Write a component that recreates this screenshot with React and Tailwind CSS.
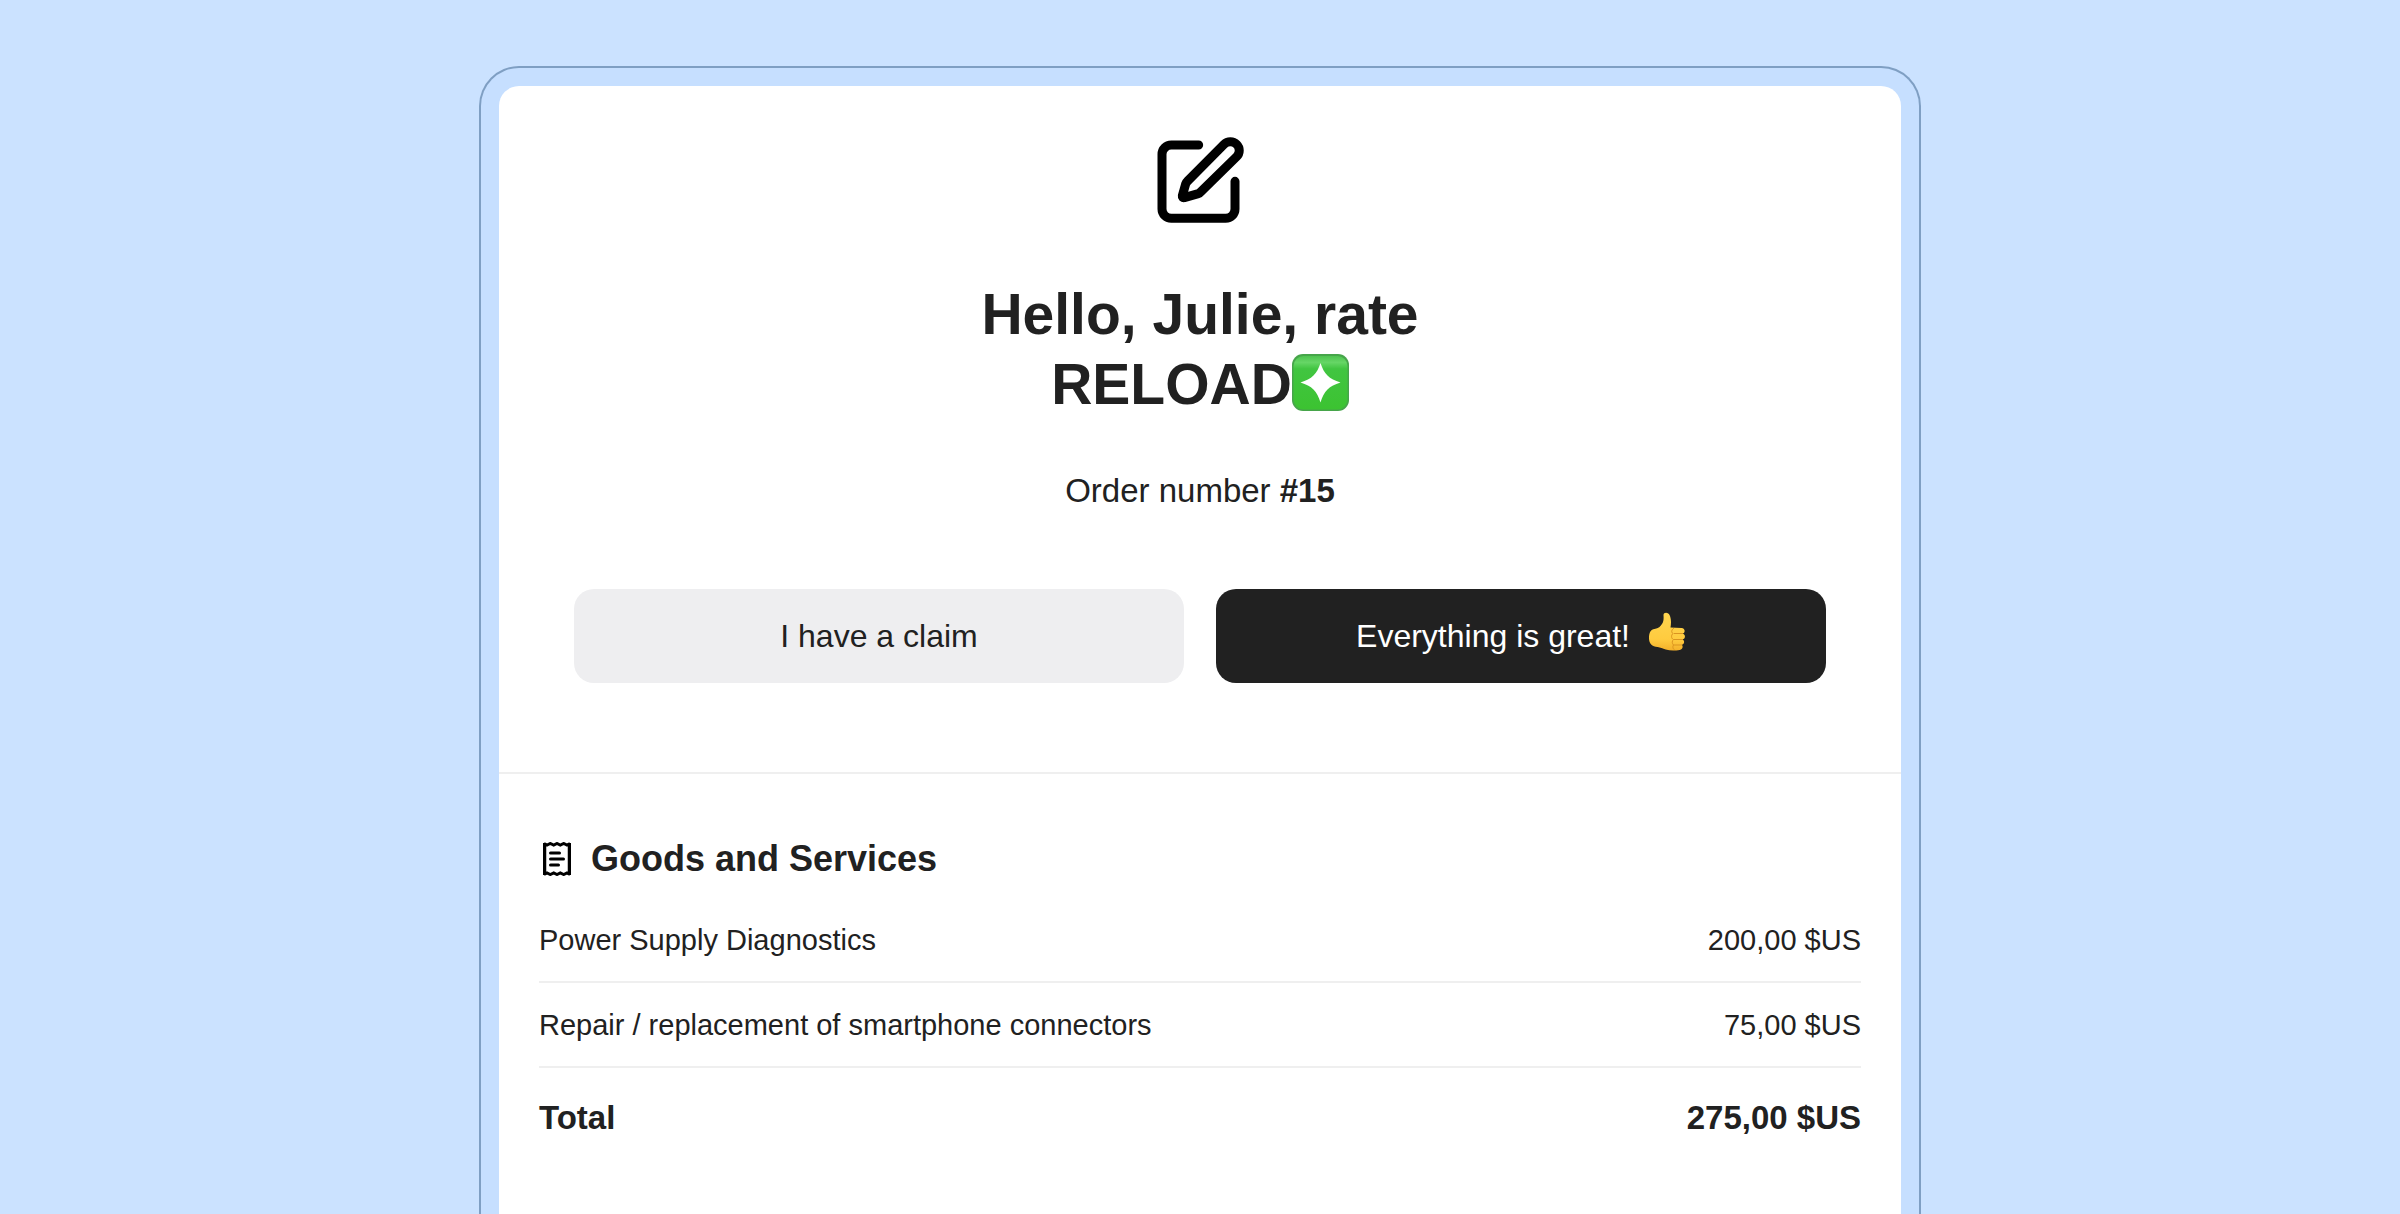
import React from 'react';

const items = [
    { id: 1, title: 'Power Supply Diagnostics', price: '200,00 $US' },
    { id: 2, title: 'Repair / replacement of smartphone connectors', price: '75,00 $US' },
];

function EditIcon() {
    return (
        <svg className="size-[88px]" viewBox="80 49 264 264" fill="none" stroke="#000" strokeWidth="27" strokeLinecap="round" strokeLinejoin="round" aria-hidden="true">
            <path d="M208 76H126a28 28 0 0 0-28 28v164a28 28 0 0 0 28 28h163a28 28 0 0 0 28-28v-83" />
            <path d="M175 184 284 74a27 27 0 0 1 38 0 26 26 0 0 1 0 37L213 218q-2 3-6 4l-42 12q-7 1-6-6l10-35q2-5 6-9Z" />
        </svg>
    );
}

function SparkleIcon() {
    return (
        <svg className="inline-block size-[57px] align-[-7px]" viewBox="0 0 57 57" aria-hidden="true">
            <defs>
                <linearGradient id="sparkle-bg" x1="0" y1="0" x2="0" y2="1">
                    <stop offset="0" stopColor="#4fc350" />
                    <stop offset="0.12" stopColor="#66d666" />
                    <stop offset="0.24" stopColor="#41c541" />
                    <stop offset="1" stopColor="#3cc331" />
                </linearGradient>
            </defs>
            <rect width="57" height="57" rx="11" fill="#46a54a" />
            <rect x="1.5" y="2" width="54" height="53.5" rx="10" fill="url(#sparkle-bg)" />
            <path d="M28.5 9C32 20 37 25 48.5 28.5 37 32 32 37 28.5 48.5 25 37 20 32 8.500 28.500 20 25 25 20 28.500 9Z" fill="#fff" />
        </svg>
    );
}

function ThumbIcon() {
    return (
        <svg className="-mt-2 h-10 w-[38px]" viewBox="0 0 38 40" aria-hidden="true">
            <defs>
                <linearGradient id="thumb-skin" x1="0" y1="0" x2="0" y2="1">
                    <stop offset="0" stopColor="#ffd650" />
                    <stop offset="0.7" stopColor="#ffcb3f" />
                    <stop offset="1" stopColor="#f3b02a" />
                </linearGradient>
            </defs>
            <path d="M15.500 3c0-3 5-3.500 6.500 1 1.500 4.500 1 8 .5 11.500l11 .5c4 .3 4 5 1 5.500 3.500 1 3 5.500 0 6 2.500 1 2 5-.8 5.300 1.800 1.200 1 5-2 5.200-5 .8-10 .8-14-.5-3-1-5.500-2-8-2.500C4 34.500 1 32 1 26c0-6 2-8.500 5.500-9 4-.5 6-2.500 7.800-5.500 1.500-2.500 1.400-5.500 1.200-8.500Z" fill="url(#thumb-skin)" />
            <path d="M34.500 21.500h-8.500M34.500 27.500h-8.500M33.500 33h-7.500M25.500 16.500c-2 1-2.500 4-.5 5-2 1.500-2 5 .5 6-1.800 1.500-1.500 4 0 5.500-1 1.500-.8 3.500.5 4.500" fill="none" stroke="#db9420" strokeWidth="1" strokeLinecap="round" />
        </svg>
    );
}

function ReceiptIcon() {
    return (
        <svg className="h-[34px] w-7" viewBox="0 0 28 34" fill="none" stroke="#000" strokeWidth="3" aria-hidden="true">
            <path d="M1.500 1v32M26.500 1v32" strokeWidth="3.500" />
            <path d="M1 1.500 4 3l3.300-1.500L10.700 3 14 1.500 17.300 3l3.400-1.500L24 3l3-1.500M1 32.500 4 31l3.300 1.500 3.400-1.500 3.300 1.500 3.300-1.500 3.400 1.500L24 31l3 1.500" />
            <path d="M7.500 11h9M7.500 17h13M7.500 23h8" strokeLinecap="round" />
        </svg>
    );
}

export default function App() {
    return (
        <div className="flex min-h-screen flex-col items-center bg-[#cbe2ff] pt-[66px] font-['Liberation_Sans',Arial,sans-serif] text-[#212121]">
            <div className="flex w-full max-w-[1442px] grow flex-col rounded-t-[40px] border-2 border-b-0 border-[#7f9fc3] bg-[#c6dfff] px-[18px] pt-[18px]">
                <main className="grow rounded-t-[20px] bg-white">
                    <section className="flex flex-col items-center border-b-2 border-[#efefef] px-[75px] pt-[50px] pb-[89px] text-center">
                        <EditIcon />
                        <h1 className="mt-[55px] text-[57px] leading-[70px] font-bold">
                            Hello, Julie, rate
                            <br />
                            RELOAD<SparkleIcon />
                        </h1>
                        <p className="mt-[52px] text-[33px] leading-10">
                            Order number <b>#15</b>
                        </p>
                        <div className="mt-[78px] grid w-full grid-cols-2 gap-8 text-[32px] leading-10">
                            <button type="button" className="rounded-[20px] bg-[#eeeef0] py-[27px]">
                                I have a claim
                            </button>
                            <button type="button" className="flex items-center justify-center gap-[18px] rounded-[20px] bg-[#212121] py-[27px] text-white">
                                Everything is great!
                                <ThumbIcon />
                            </button>
                        </div>
                    </section>

                    <section className="px-10 pt-[63px] pb-16">
                        <h2 className="flex items-center gap-5 pl-1 text-[36px] leading-[44px] font-bold">
                            <ReceiptIcon />
                            Goods and Services
                        </h2>
                        <table className="mt-[17px] w-full text-left text-[29px] leading-10">
                            <tbody>
                                {items.map((item) => (
                                    <tr key={item.id} className="border-b-2 border-[#efefef]">
                                        <td className="pt-[22px] pb-[21px]">{item.title}</td>
                                        <td className="pt-[22px] pb-[21px] text-right">{item.price}</td>
                                    </tr>
                                ))}
                            </tbody>
                            <tfoot className="text-[33px] font-bold">
                                <tr>
                                    <th scope="row" className="pt-[30px]">Total</th>
                                    <td className="pt-[30px] text-right">275,00 $US</td>
                                </tr>
                            </tfoot>
                        </table>
                    </section>
                </main>
            </div>
        </div>
    );
}
